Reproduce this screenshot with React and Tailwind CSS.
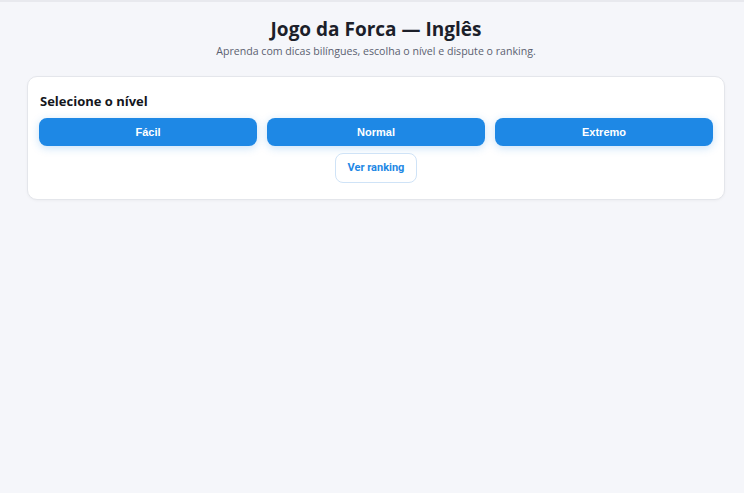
import React from 'react';

const levels = ['Fácil', 'Normal', 'Extremo'];

function LevelButton({ label }) {
  return (
    <button className="h-[28px] rounded-[8px] bg-[#1e88e5] text-white text-[11px] font-bold shadow-[0_2px_8px_rgba(30,136,229,0.25)] [font-family:'Liberation_Sans',Arial,sans-serif]">
      {label}
    </button>
  );
}

export default function App() {
  return (
    <div className="min-h-[493px] bg-[#f5f6fa] border-t-2 border-[#e8e9ee] [font-family:'Open_Sans','Noto_Sans',sans-serif]">
      <div className="pl-[27px] pr-[19px]">
        <header className="pt-[15px] text-center">
          <h1 className="text-[19px] leading-[25px] font-bold text-[#1c1f2a]">Jogo da Forca — Inglês</h1>
          <p className="mt-[1px] text-[10.6px] leading-[16px] text-[#5b6170]">
            Aprenda com dicas bilíngues, escolha o nível e dispute o ranking.
          </p>
        </header>

        <section className="mt-[17px] bg-white rounded-[10px] border border-[#e4e6eb] shadow-[0_1px_3px_rgba(0,0,0,0.04)] px-[11px] pt-[15px] pb-[16px]">
          <h2 className="text-[13px] leading-[19px] font-bold text-[#14161c] pl-[1px]">Selecione o nível</h2>
          <div className="mt-[7px] grid grid-cols-3 gap-[10px]">
            {levels.map((l) => (
              <LevelButton key={l} label={l} />
            ))}
          </div>
          <div className="mt-[7px] flex justify-center">
            <button className="h-[30px] px-[12px] rounded-[8px] border border-[#cfe3f7] bg-white text-[#1e88e5] text-[11px] font-bold [font-family:'Roboto','Liberation_Sans',sans-serif]">
              Ver ranking
            </button>
          </div>
        </section>
      </div>
    </div>
  );
}
